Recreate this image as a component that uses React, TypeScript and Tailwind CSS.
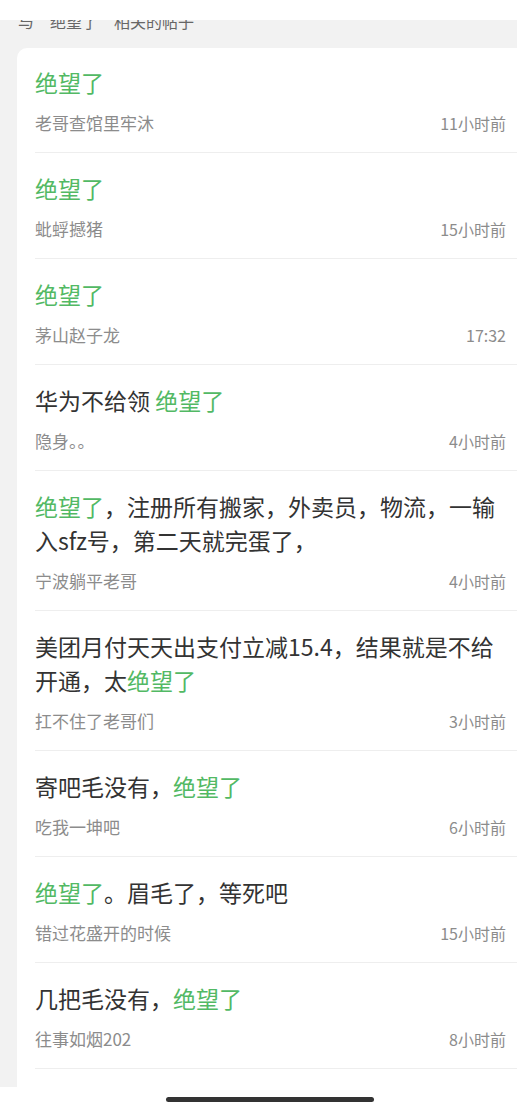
const font = { fontFamily: '"Noto Sans CJK SC", "Noto Sans", sans-serif' };

type Seg = { t: string; g?: boolean };
type Post = { title: Seg[]; user: string; time: string };

const posts: Post[] = [
  { title: [{ t: "绝望了", g: true }], user: "老哥查馆里牢沐", time: "11小时前" },
  { title: [{ t: "绝望了", g: true }], user: "蚍蜉撼猪", time: "15小时前" },
  { title: [{ t: "绝望了", g: true }], user: "茅山赵子龙", time: "17:32" },
  { title: [{ t: "华为不给领 " }, { t: "绝望了", g: true }], user: "隐身。。", time: "4小时前" },
  {
    title: [{ t: "绝望了", g: true }, { t: "，注册所有搬家，外卖员，物流，一输入sfz号，第二天就完蛋了，" }],
    user: "宁波躺平老哥",
    time: "4小时前",
  },
  {
    title: [{ t: "美团月付天天出支付立减15.4，结果就是不给开通，太" }, { t: "绝望了", g: true }],
    user: "扛不住了老哥们",
    time: "3小时前",
  },
  { title: [{ t: "寄吧毛没有，" }, { t: "绝望了", g: true }], user: "吃我一坤吧", time: "6小时前" },
  { title: [{ t: "绝望了", g: true }, { t: "。眉毛了，等死吧" }], user: "错过花盛开的时候", time: "15小时前" },
  { title: [{ t: "几把毛没有，" }, { t: "绝望了", g: true }], user: "往事如烟202", time: "8小时前" },
];

function Row({ post, first }: { post: Post; first: boolean }) {
  return (
    <div className={`border-b border-[#eeeeee] pr-[11px] pb-[17px] ${first ? "pt-[17px]" : "pt-[18px]"}`}>
      <div className="text-[23px] leading-[34px] text-[#333333]">
        {post.title.map((s, i) => (
          <span key={i} className={s.g ? "text-[#52b964]" : ""}>
            {s.t}
          </span>
        ))}
      </div>
      <div className="mt-[12px] flex items-center justify-between text-[17px] leading-[24px] text-[#8c8c8c]">
        <span>{post.user}</span>
        <span className="text-[16px]">{post.time}</span>
      </div>
    </div>
  );
}

export default function App() {
  return (
    <main className="flex h-[1111px] w-[517px] flex-col overflow-hidden bg-white" style={font}>
      <div className="h-[20px] shrink-0 bg-white" />
      <div className="flex h-[1067px] shrink-0 flex-col overflow-hidden bg-[#f2f2f2]">
        <div className="h-[28px] shrink-0 overflow-hidden">
          <div className="-mt-[11px] pl-[18px] text-[16px] leading-[24px] text-[#666666]">
            与“绝望了”相关的帖子
          </div>
        </div>
        <section className="ml-[17px] flex-1 rounded-tl-[10px] bg-white pl-[18px]">
          {posts.map((p, i) => (
            <Row key={i} post={p} first={i === 0} />
          ))}
        </section>
      </div>
      <div className="flex flex-1 items-start pt-[10px] pl-[166px]">
        <div className="h-[5px] w-[208px] rounded-full bg-[#333333]" />
      </div>
    </main>
  );
}
